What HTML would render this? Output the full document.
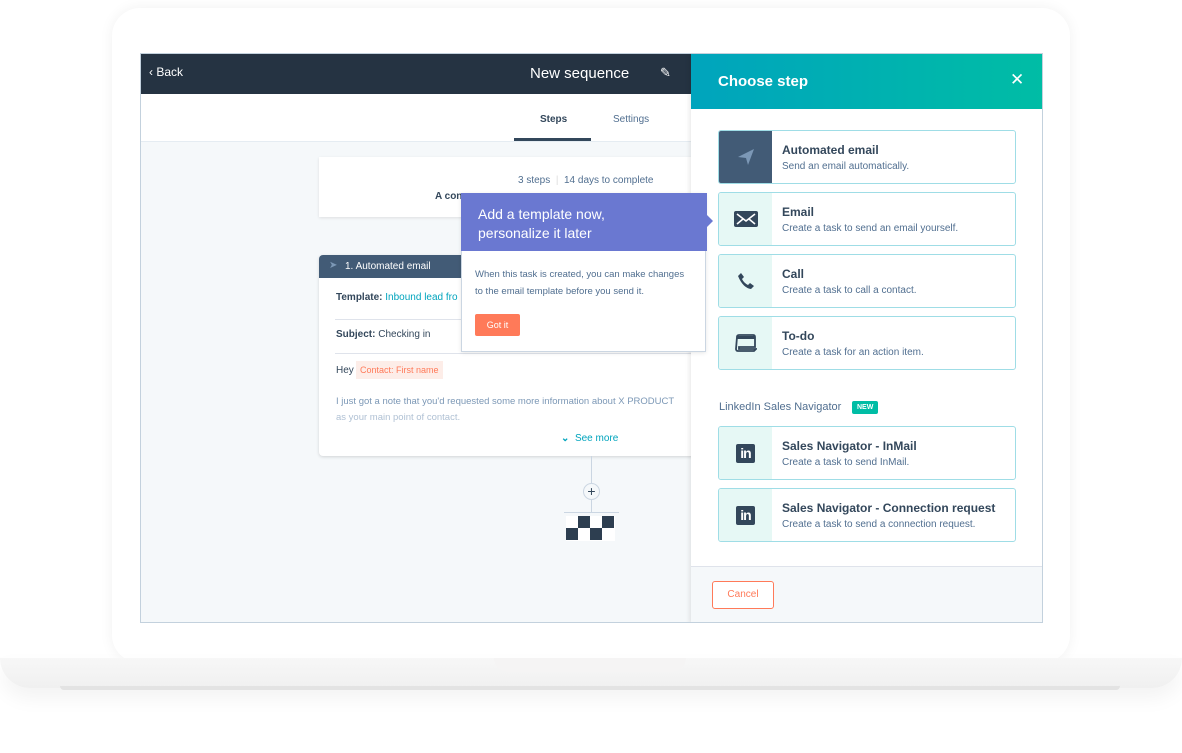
<!DOCTYPE html>
<html><head><meta charset="utf-8"><style>
*{box-sizing:border-box;margin:0;padding:0}
body{width:1182px;height:753px;background:#fff;position:relative;overflow:hidden;font-family:"Liberation Sans",sans-serif;color:#33475b}
.a{position:absolute}
.item{position:absolute;left:718px;width:298px;height:54px;border:1px solid #9fdde6;border-radius:3px;background:#fff;overflow:hidden}
.item .ic{position:absolute;left:0;top:0;width:53px;height:52px;background:#e6f8f5;display:flex;align-items:center;justify-content:center}
.item .t{position:absolute;left:63px;top:12px;font-size:12px;font-weight:bold;color:#33475b}
.item .d{position:absolute;left:63px;top:30px;font-size:10px;color:#516f90}
.li{width:19px;height:19px;background:#33475b;border-radius:2px;color:#fff;font-weight:bold;font-size:14px;line-height:19px;text-align:center;letter-spacing:-1px}
</style></head><body>
<!-- laptop -->
<div class="a" style="left:112px;top:8px;width:958px;height:655px;border-radius:28px;background:#fff;box-shadow:0 0 14px rgba(0,0,0,.06)"></div>
<div class="a" style="left:0;top:658px;width:1182px;height:30px;background:linear-gradient(#f7f7f7,#f0f0f0);border-radius:0 0 30px 30px;box-shadow:0 10px 20px rgba(0,0,0,.05)"></div>
<div class="a" style="left:60px;top:686px;width:1060px;height:4px;background:#e3e3e3;border-radius:0 0 40px 40px"></div>
<div class="a" style="left:494px;top:658px;width:192px;height:14px;background:#f5f4f4;border-radius:0 0 14px 14px"></div>
<!-- screen -->
<div class="a" style="left:140px;top:53px;width:903px;height:570px;background:#f5f8fa;border:1px solid #c3d1dd;overflow:hidden">
 <div class="a" style="left:0;top:0;width:552px;height:40px;background:#253342"></div>
 <div class="a" style="left:8px;top:11px;color:#fff;font-size:12px">&#8249;&nbsp;Back</div>
 <div class="a" style="left:389px;top:11px;color:#fff;font-size:15px">New sequence</div>
 <div class="a" style="left:519px;top:11px;color:#fff;font-size:13px">&#9998;</div>
 <div class="a" style="left:0;top:40px;width:552px;height:48px;background:#fff;border-bottom:1px solid #e5ecf2"></div>
 <div class="a" style="left:399px;top:60px;font-size:10px;font-weight:bold">Steps</div>
 <div class="a" style="left:472px;top:60px;font-size:10px;color:#516f90">Settings</div>
 <div class="a" style="left:373px;top:84px;width:77px;height:3px;background:#33475b"></div>
 <!-- summary card -->
 <div class="a" style="left:178px;top:103px;width:380px;height:60px;background:#fff;box-shadow:0 1px 3px rgba(0,0,0,.1)"></div>
 <div class="a" style="left:377px;top:121px;font-size:10px;color:#516f90">3 steps &nbsp;<span style="color:#ddd">|</span>&nbsp; 14 days to complete</div>
 <div class="a" style="left:294px;top:137px;font-size:10px;font-weight:bold">A con</div>
 <!-- email card -->
 <div class="a" style="left:178px;top:201px;width:380px;height:201px;background:#fff;border-radius:4px;box-shadow:0 1px 3px rgba(0,0,0,.15);overflow:hidden">
  <div class="a" style="left:0;top:0;width:380px;height:23px;background:#425b76"></div>
  <div class="a" style="left:10px;top:5px;color:#7c98b6;font-size:10px">&#10148;</div>
  <div class="a" style="left:26px;top:6px;color:#fff;font-size:10px">1. Automated email</div>
  <div class="a" style="left:17px;top:37px;font-size:10px"><b>Template:</b> <span style="color:#00a4bd">Inbound lead fro</span></div>
  <div class="a" style="left:16px;top:64px;width:360px;height:1px;background:#dfe3eb"></div>
  <div class="a" style="left:17px;top:74px;font-size:10px"><b>Subject:</b> Checking in</div>
  <div class="a" style="left:16px;top:98px;width:360px;height:1px;background:#dfe3eb"></div>
  <div class="a" style="left:17px;top:110px;font-size:10px">Hey</div>
  <div class="a" style="left:37px;top:106px;padding:4px 4px;background:#fdede8;color:#ff7a59;font-size:9px">Contact: First name</div>
  <div class="a" style="left:17px;top:141px;font-size:9.5px;color:#7c98b6;white-space:nowrap">I just got a note that you'd requested some more information about X PRODUCT</div>
  <div class="a" style="left:17px;top:157px;font-size:9.5px;color:#b0c1d4">as your main point of contact.</div>
  <div class="a" style="left:242px;top:178px;font-size:10px;color:#00a4bd;font-weight:bold">&#8964;&nbsp; <span style="font-weight:normal">See more</span></div>
 </div>
 <!-- connector -->
 <div class="a" style="left:450px;top:402px;width:1px;height:56px;background:#cbd6e2"></div>
 <div class="a" style="left:442px;top:429px;width:17px;height:17px;border-radius:50%;border:1px solid #cbd6e2;background:#f5f8fa;text-align:center;line-height:15px;font-size:14px">+</div>
 <div class="a" style="left:423px;top:458px;width:55px;height:1px;background:#cbd6e2"></div>
 <div class="a" style="left:425px;top:462px;width:49px;height:25px;background:#fff"></div>
 <div class="a" style="left:437px;top:462px;width:12px;height:12px;background:#2d3e50"></div>
 <div class="a" style="left:461px;top:462px;width:12px;height:12px;background:#2d3e50"></div>
 <div class="a" style="left:425px;top:474px;width:12px;height:12px;background:#2d3e50"></div>
 <div class="a" style="left:449px;top:474px;width:12px;height:12px;background:#2d3e50"></div>
 <!-- right panel -->
 <div class="a" style="left:550px;top:0;width:352px;height:570px;background:#fff;box-shadow:-2px 0 4px rgba(0,0,0,.08)"></div>
 <div class="a" style="left:550px;top:0;width:352px;height:55px;background:linear-gradient(90deg,#00a4bd,#00bda5)"></div>
 <div class="a" style="left:577px;top:19px;color:#fff;font-size:15px;font-weight:bold">Choose step</div>
 <div class="a" style="left:869px;top:16px;color:#fff;font-size:17px">&#10005;</div>
 <div class="a" style="left:550px;top:512px;width:352px;height:58px;background:#f5f8fa;border-top:1px solid #dfe3eb"></div>
 <div class="a" style="left:571px;top:527px;width:62px;height:28px;border:1px solid #ff7a59;border-radius:3px;background:#fff;color:#ff7a59;font-size:10px;text-align:center;line-height:26px">Cancel</div>
 <div class="a" style="left:578px;top:347px;font-size:11px;color:#516f90">LinkedIn Sales Navigator</div>
 <div class="a" style="left:711px;top:347px;padding:1px 5px;background:#00bda5;color:#fff;font-size:7px;font-weight:bold;border-radius:2px;line-height:11px">NEW</div>
</div>
<!-- items -->
<div class="item" style="top:130px"><div class="ic" style="background:#425b76"><svg width="18" height="18" viewBox="0 0 18 18"><path d="M1 9 L17 1 L11 17 L9 10 Z" fill="#7c98b6"/></svg></div><div class="t">Automated email</div><div class="d">Send an email automatically.</div></div>
<div class="item" style="top:192px"><div class="ic"><svg width="24" height="16" viewBox="0 0 24 16"><rect width="24" height="16" rx="2" fill="#33475b"/><path d="M3 3 L12 10 L21 3 M3 13 L9 8 M21 13 L15 8" stroke="#fff" stroke-width="1.6" fill="none"/></svg></div><div class="t">Email</div><div class="d">Create a task to send an email yourself.</div></div>
<div class="item" style="top:254px"><div class="ic"><svg width="18" height="18" viewBox="0 0 18 18"><path d="M4 1 L7 5 L5 7 Q7 11 11 13 L13 11 L17 14 L14 17 Q6 16 1 4 Z" fill="#33475b"/></svg></div><div class="t">Call</div><div class="d">Create a task to call a contact.</div></div>
<div class="item" style="top:316px"><div class="ic"><svg width="22" height="18" viewBox="0 0 22 18"><path d="M2 3 Q2 1 4 1 H18 Q20 1 20 3 V13 H4 V15 H21 L19 17 H3 Q1 17 1 15 Z" fill="none" stroke="#33475b" stroke-width="1.8"/><rect x="2" y="2" width="18" height="3" fill="#33475b"/></svg></div><div class="t">To-do</div><div class="d">Create a task for an action item.</div></div>
<div class="item" style="top:426px"><div class="ic"><div class="li">in</div></div><div class="t">Sales Navigator - InMail</div><div class="d">Create a task to send InMail.</div></div>
<div class="item" style="top:488px"><div class="ic"><div class="li">in</div></div><div class="t">Sales Navigator - Connection request</div><div class="d">Create a task to send a connection request.</div></div>
<!-- tooltip -->
<div class="a" style="left:461px;top:193px;width:245px;height:159px;background:#fff;border:1px solid #cbd6e2;box-shadow:0 1px 4px rgba(0,0,0,.1)">
 <div class="a" style="left:-1px;top:-1px;width:246px;height:58px;background:#6a78d1"></div>
 <div class="a" style="left:16px;top:11px;color:#fff;font-size:14px;line-height:19px">Add a template now,<br>personalize it later</div>
 <div class="a" style="left:245px;top:21px;width:0;height:0;border-top:6px solid transparent;border-bottom:6px solid transparent;border-left:6px solid #6a78d1"></div>
 <div class="a" style="left:13px;top:72px;font-size:9.5px;line-height:17px;color:#516f90">When this task is created, you can make changes<br>to the email template before you send it.</div>
 <div class="a" style="left:13px;top:120px;width:45px;height:22px;background:#ff7a59;border-radius:2px;color:#fff;font-size:9px;text-align:center;line-height:22px">Got it</div>
</div>
</body></html>
